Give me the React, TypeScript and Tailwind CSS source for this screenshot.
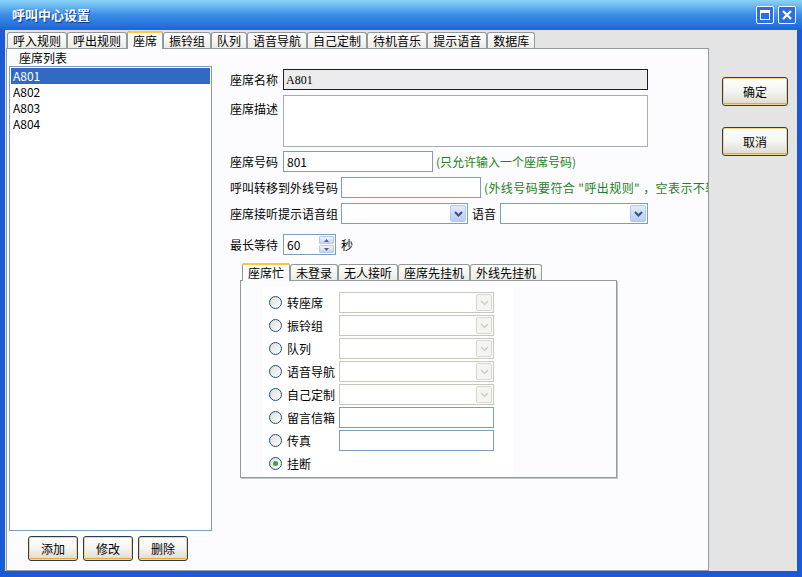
import type { ReactNode } from 'react';

const FONT = { fontFamily: '"Noto Sans CJK SC", "Liberation Sans", sans-serif' };

const TOP_TABS = ['呼入规则', '呼出规则', '座席', '振铃组', '队列', '语音导航', '自己定制', '待机音乐', '提示语音', '数据库'];
const SUB_TABS = ['座席忙', '未登录', '无人接听', '座席先挂机', '外线先挂机'];
const AGENTS = ['A801', 'A802', 'A803', 'A804'];

const RADIOS: { label: string; kind: 'select' | 'input' | 'none' }[] = [
  { label: '转座席', kind: 'select' },
  { label: '振铃组', kind: 'select' },
  { label: '队列', kind: 'select' },
  { label: '语音导航', kind: 'select' },
  { label: '自己定制', kind: 'select' },
  { label: '留言信箱', kind: 'input' },
  { label: '传真', kind: 'input' },
  { label: '挂断', kind: 'none' },
];

function Tab({ label, active }: { label: string; active?: boolean }) {
  return (
    <div
      className={`relative shrink-0 flex items-center px-[5px] border border-b-0 rounded-t-[3px] text-[12px] leading-none ${
        active
          ? 'h-[18px] -mb-px z-10 bg-[#fcfcfe] border-[#919b9c] border-t-[#e68b2c]'
          : 'h-[16px] mt-[2px] bg-gradient-to-b from-white to-[#ecebe6] border-[#919b9c]'
      }`}
    >
      {active && <div className="absolute left-0 right-0 -top-px h-[2px] bg-[#ffc83c] rounded-t-[3px]" />}
      <span className="text-black">{label}</span>
    </div>
  );
}

function ComboArrow({ disabled }: { disabled?: boolean }) {
  return (
    <div
      className={`w-[16px] h-[17px] rounded-[2px] border flex items-center justify-center ${
        disabled
          ? 'border-[#d6d6d2] bg-[#f5f5f0]'
          : 'border-[#b4c8f6] bg-gradient-to-b from-[#e3ecfd] to-[#b7cbf4]'
      }`}
    >
      <svg width="9" height="6" viewBox="0 0 9 6">
        <path
          d="M1 1 L4.5 4.5 L8 1"
          fill="none"
          stroke={disabled ? '#c9c9c4' : '#3d4f7c'}
          strokeWidth={disabled ? 1.2 : 2}
        />
      </svg>
    </div>
  );
}

function Select({ width, disabled }: { width: number; disabled?: boolean }) {
  return (
    <div
      className={`shrink-0 h-[21px] border flex items-center justify-end pr-[1px] bg-white ${
        disabled ? 'border-[#c9c7ba]' : 'border-[#7f9db9]'
      }`}
      style={{ width }}
    >
      <ComboArrow disabled={disabled} />
    </div>
  );
}

function Input({ width, value, className = '' }: { width: number; value?: string; className?: string }) {
  return (
    <div
      className={`shrink-0 h-[21px] border border-[#7f9db9] bg-white flex items-center pl-[3px] text-[12px] ${className}`}
      style={{ width }}
    >
      {value}
    </div>
  );
}

function XpButton({ children, className = '' }: { children: ReactNode; className?: string }) {
  return (
    <div
      className={`flex items-center justify-center rounded-[3px] border border-[#2d3b4f] bg-gradient-to-b from-white via-[#f4f4f0] to-[#dcdad0] text-[12px] text-black shadow-[inset_0_0_0_1px_#f7d48a,inset_0_-2px_0_#e5a93f] ${className}`}
    >
      {children}
    </div>
  );
}

function Radio({ checked }: { checked?: boolean }) {
  return (
    <div className="w-[13px] h-[13px] rounded-full border border-[#1c5180] bg-gradient-to-br from-[#dcdcd6] to-white flex items-center justify-center">
      {checked && <div className="w-[5px] h-[5px] rounded-full bg-[#3fa43f]" />}
    </div>
  );
}

function FormRow({ label, children, className = '' }: { label: string; children: ReactNode; className?: string }) {
  return (
    <div className={`flex items-center ${className}`}>
      <span className="shrink-0 text-[12px] text-black whitespace-nowrap">{label}</span>
      {children}
    </div>
  );
}

export default function App() {
  return (
    <div className="w-[802px] h-[577px] flex flex-col bg-[#1b5ad6] overflow-hidden" style={FONT}>
      {/* title bar */}
      <div className="h-[30px] shrink-0 flex items-center justify-between bg-gradient-to-b from-[#8ad3f7] via-[#3b8de6] to-[#1d64d8] pl-[12px] pr-[6px]">
        <span className="text-[13px] font-bold text-white [text-shadow:1px_1px_0_#0b3a8c]">呼叫中心设置</span>
        <div className="flex gap-[4px]">
          <div className="w-[18px] h-[18px] rounded-[2px] border border-white bg-[#2c6ee6] flex items-center justify-center">
            <div className="w-[10px] h-[10px] border border-white border-t-[3px]" />
          </div>
          <div className="w-[18px] h-[18px] rounded-[2px] border border-white bg-[#2c6ee6] flex items-center justify-center">
            <svg width="10" height="10" viewBox="0 0 10 10">
              <path d="M1 1 L9 9 M9 1 L1 9" stroke="white" strokeWidth="2.2" />
            </svg>
          </div>
        </div>
      </div>

      {/* client area */}
      <div className="h-[541px] mx-[5px] bg-[#e4e4e4] flex flex-col">
        {/* top tabs */}
        <div className="h-[17px] mt-[1px] pl-[2px] flex items-end">
          {TOP_TABS.map((t) => (
            <Tab key={t} label={t} active={t === '座席'} />
          ))}
        </div>

        <div className="flex flex-1">
          {/* tab panel */}
          <div className="w-[703px] ml-[1px] h-[523px] border border-[#919b9c] bg-[#fcfcfe] flex">
            {/* left list */}
            <div className="w-[206px] shrink-0 flex flex-col pl-[2px]">
              <div className="h-[17px] pl-[10px] pt-[3px] text-[12px] leading-none text-black">座席列表</div>
              <div className="w-[203px] h-[465px] border border-[#7f9db9] bg-white p-[1px]">
                {AGENTS.map((a, i) => (
                  <div
                    key={a}
                    className={`h-[16px] pl-[2px] flex items-center text-[12px] ${
                      i === 0 ? 'bg-[#316ac5] text-white' : 'text-black'
                    }`}
                  >
                    {a}
                  </div>
                ))}
              </div>
              <div className="flex gap-[5px] pl-[19px] mt-[5px]">
                <XpButton className="w-[50px] h-[25px]">添加</XpButton>
                <XpButton className="w-[50px] h-[25px]">修改</XpButton>
                <XpButton className="w-[50px] h-[25px]">删除</XpButton>
              </div>
            </div>

            {/* right form */}
            <div className="flex-1 min-w-0 pl-[17px] pt-[20px] flex flex-col overflow-hidden">
              <FormRow label="座席名称">
                <div className="shrink-0 ml-[5px] w-[365px] h-[21px] border border-[#1e1e1e] bg-[#ececec] flex items-center pl-[2px] text-[12px] text-black" style={{ fontFamily: '"Liberation Serif", serif' }}>
                  A801
                </div>
              </FormRow>
              <div className="flex items-start mt-[5px]">
                <span className="text-[12px] text-black mt-[5px]">座席描述</span>
                <div className="shrink-0 ml-[5px] w-[365px] h-[52px] border border-[#a5acb5] bg-white" />
              </div>
              <FormRow label="座席号码" className="mt-[4px]">
                <Input width={150} value="801" className="ml-[5px]" />
                <span className="ml-[3px] text-[12px] text-[#1f7f24] whitespace-nowrap">(只允许输入一个座席号码)</span>
              </FormRow>
              <FormRow label="呼叫转移到外线号码" className="mt-[5px]">
                <Input width={140} className="ml-[3px]" />
                <span className="shrink-0 ml-[3px] text-[12px] text-[#1f7f24] whitespace-nowrap tracking-[0.4px]">(外线号码要符合 "呼出规则" ，空表示不转移)</span>
              </FormRow>
              <FormRow label="座席接听提示语音组" className="mt-[5px]">
                <div className="ml-[3px]">
                  <Select width={127} />
                </div>
                <span className="ml-[4px] text-[12px] text-black">语音</span>
                <div className="ml-[4px]">
                  <Select width={148} />
                </div>
              </FormRow>
              <FormRow label="最长等待" className="mt-[10px]">
                <div className="shrink-0 ml-[5px] w-[53px] h-[21px] border border-[#7f9db9] bg-white flex items-center justify-between pl-[3px] pr-[1px] text-[12px]">
                  60
                  <div className="flex flex-col gap-[1px]">
                    <div className="w-[15px] h-[8px] border border-[#b4c8f6] bg-gradient-to-b from-[#f0f4fd] to-[#c6d5f5] rounded-[1px] flex items-center justify-center">
                      <svg width="5" height="3" viewBox="0 0 5 3"><path d="M0 3 L2.5 0 L5 3Z" fill="#4d6185" /></svg>
                    </div>
                    <div className="w-[15px] h-[8px] border border-[#b4c8f6] bg-gradient-to-b from-[#f0f4fd] to-[#c6d5f5] rounded-[1px] flex items-center justify-center">
                      <svg width="5" height="3" viewBox="0 0 5 3"><path d="M0 0 L2.5 3 L5 0Z" fill="#4d6185" /></svg>
                    </div>
                  </div>
                </div>
                <span className="ml-[5px] text-[12px] text-black">秒</span>
              </FormRow>

              {/* sub tabs */}
              <div className="ml-[10px] mt-[7px] flex flex-col w-[377px]">
                <div className="h-[18px] pl-[2px] flex items-end">
                  {SUB_TABS.map((t) => (
                    <Tab key={t} label={t} active={t === '座席忙'} />
                  ))}
                </div>
                <div className="h-[198px] border border-[#919b9c] bg-[#fcfcfe] shadow-[1px_1px_0_#c8c8c8] pl-[22px] pt-[6px]">
                  <div className="w-[250px] h-[188px] bg-white flex flex-col pt-[4px] overflow-hidden">
                    {RADIOS.map((r) => (
                      <div key={r.label} className="h-[23px] shrink-0 flex items-center pl-[6px]">
                        <Radio checked={r.kind === 'none'} />
                        <span className="ml-[5px] w-[52px] text-[12px] text-black whitespace-nowrap">{r.label}</span>
                        {r.kind === 'select' && <Select width={155} disabled />}
                        {r.kind === 'input' && (
                          <div className="w-[155px] h-[21px] border border-[#7f9db9] bg-white" />
                        )}
                      </div>
                    ))}
                  </div>
                </div>
              </div>
            </div>
          </div>

          {/* right buttons */}
          <div className="flex-1 flex flex-col items-start pl-[13px] pt-[29px] gap-[21px]">
            <XpButton className="w-[66px] h-[29px]">确定</XpButton>
            <XpButton className="w-[66px] h-[29px]">取消</XpButton>
          </div>
        </div>
      </div>
    </div>
  );
}
